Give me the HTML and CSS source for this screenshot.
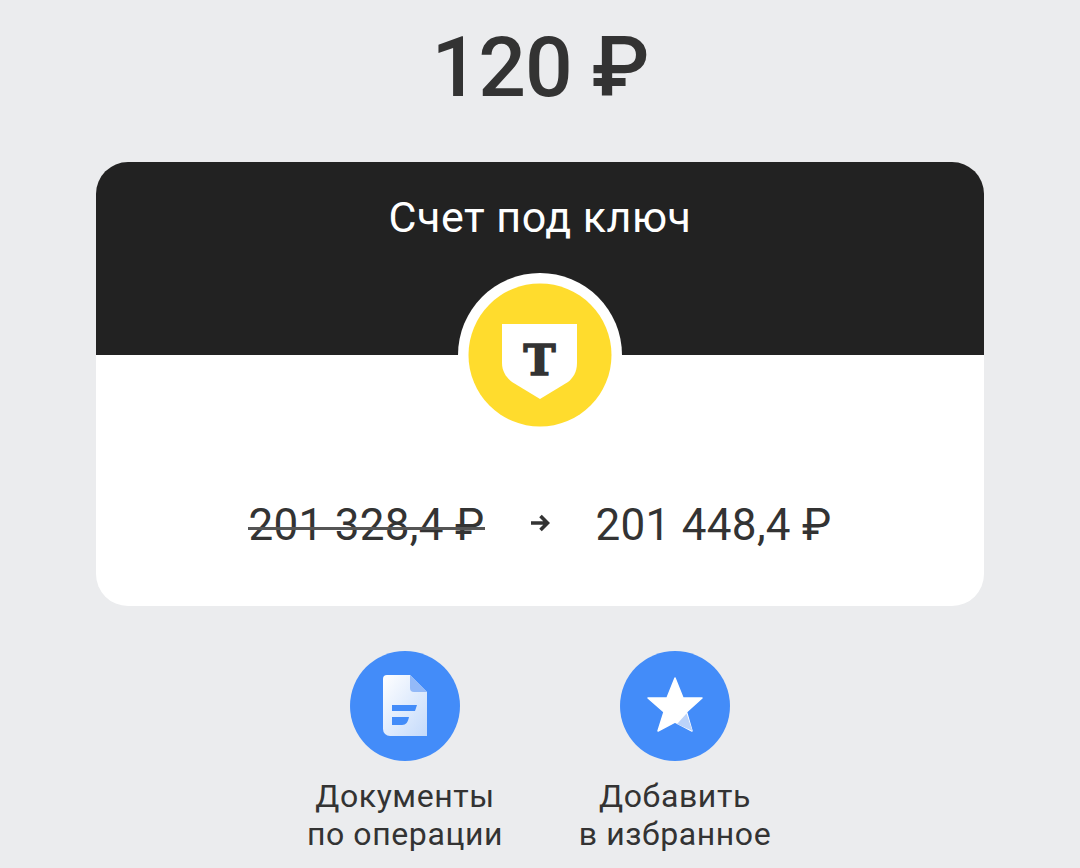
FILE: index.html
```html
<!DOCTYPE html>
<html lang="ru">
<head>
    <meta charset="UTF-8">
    <meta name="viewport" content="width=device-width, initial-scale=1.0">
    <title>Перевод</title>
    <link rel="stylesheet" href="styles.css">
</head>
<body>
    <h1 class="amount">120 ₽</h1>
    <div class="card">
        <div class="card-head">Счет под ключ</div>
        <div class="card-logo">
            <svg width="166" height="166" viewBox="0 0 166 166">
                <circle cx="83" cy="83" r="82" fill="#fff"/>
                <circle cx="83" cy="83" r="71.500" fill="#ffdc2d"/>
                <path d="M45 52H120V91C120 100 116 106 111 110L83 127L55 110C50 106 45 100 45 91Z" fill="#fff"/>
                <text class="logo-letter" x="82.500" y="103" text-anchor="middle">Т</text>
            </svg>
        </div>
        <div class="card-body">
            <span class="old-sum">201 328,4 ₽</span>
            <svg class="arrow" width="20" height="18" viewBox="0 0 20 18">
                <path d="M1 9H17M10.500 2L17.500 9L10.500 16" fill="none" stroke="#333" stroke-width="3.600"/>
            </svg>
            <span class="new-sum">201 448,4 ₽</span>
        </div>
    </div>
    <div class="actions">
        <div class="action">
            <svg class="action-icon" width="110" height="110" viewBox="0 0 110 110">
                <defs>
                    <linearGradient id="docFill" x1="0" y1="0" x2="1" y2="1">
                        <stop offset="0" stop-color="#fff"/>
                        <stop offset="1" stop-color="#c4dafb"/>
                    </linearGradient>
                </defs>
                <circle cx="55" cy="55" r="55" fill="#438cf9"/>
                <path d="M37 24H60L77 41V85H40A7 7 0 0 1 33 78V28A4 4 0 0 1 37 24Z" fill="url(#docFill)"/>
                <path d="M60 24L77 41H64A4 4 0 0 1 60 37Z" fill="#93b9f8"/>
                <path d="M42 54H67L65 60H42Z" fill="#438cf9"/>
                <path d="M42 66H59C58 71 56 74 52 74H42Z" fill="#438cf9"/>
            </svg>
            <div class="action-label">Документы<br>по операции</div>
        </div>
        <div class="action">
            <svg class="action-icon" width="110" height="110" viewBox="0 0 110 110">
                <circle cx="55" cy="55" r="55" fill="#438cf9"/>
                <path d="M55 27L63 47H82L66.500 61L72 80L55 71L38 80L44 61L28 47H47Z" fill="#fff" stroke="#fff" stroke-width="1.500" stroke-linejoin="round"/>
                <path d="M66.500 62.500L72.500 80L57 73Z" fill="#bcd3f9"/>
            </svg>
            <div class="action-label">Добавить<br>в избранное</div>
        </div>
    </div>
</body>
</html>
```

FILE: styles.css
```css
body {
    margin: 0;
    height: 868px;
    overflow: hidden;
    background: #ebecee;
    color: #333;
    font-family: Roboto, "Noto Sans", sans-serif;
}
.amount {
    margin: 0;
    height: 162px;
    padding-top: 19px;
    box-sizing: border-box;
    font-size: 84px;
    font-weight: 500;
    letter-spacing: -1px;
    line-height: 98px;
    text-align: center;
}
.card {
    position: relative;
    width: 888px;
    height: 444px;
    margin: 0 auto;
    border-radius: 32px;
    background: #fff;
    overflow: hidden;
}
.card-head {
    height: 193px;
    padding-top: 30px;
    box-sizing: border-box;
    background: #222;
    color: #fff;
    font-size: 43px;
    letter-spacing: 0.5px;
    line-height: 50px;
    text-align: center;
}
.card-logo {
    position: absolute;
    left: 361px;
    top: 110px;
    width: 166px;
    height: 166px;
}
.card-logo svg {
    display: block;
}
.logo-letter {
    font-family: "DejaVu Serif", serif;
    font-size: 43px;
    font-weight: 700;
    fill: #333;
    stroke: #333;
    stroke-width: 1.6px;
}
.card-body {
    display: flex;
    align-items: center;
    justify-content: center;
    padding-top: 144px;
    font-size: 44px;
    letter-spacing: 0.3px;
    line-height: 52px;
}
.old-sum {
    position: relative;
}
.old-sum::after {
    content: "";
    position: absolute;
    left: 0;
    right: 0;
    top: 28px;
    height: 2.5px;
    background: #555;
}
.arrow {
    margin: 0 46px 4px 45px;
}
.actions {
    display: flex;
    justify-content: center;
    gap: 60px;
    padding-top: 45px;
}
.action {
    width: 210px;
    text-align: center;
}
.action-icon {
    display: block;
    margin: 0 auto 16px;
}
.action-label {
    font-size: 32px;
    letter-spacing: 0.6px;
    line-height: 38px;
    white-space: nowrap;
}
```
